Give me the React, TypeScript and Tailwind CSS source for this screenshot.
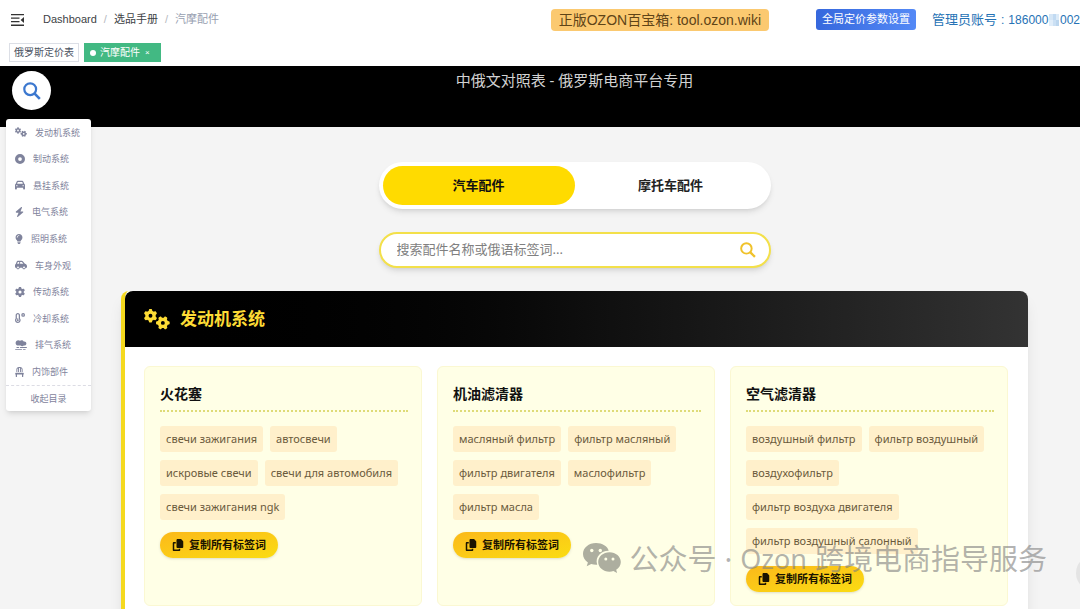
import React, { useState } from 'react';
import {
  FaBolt,
  FaCar,
  FaCarSide,
  FaChair,
  FaCircleDot,
  FaCopy,
  FaGear,
  FaGears,
  FaLightbulb,
  FaSmog,
  FaTemperatureLow,
} from 'react-icons/fa6';

const MENU = [
  { icon: FaGears, label: '发动机系统', size: 'h-[10px] w-3' },
  { icon: FaCircleDot, label: '制动系统', size: 'size-[10px]' },
  { icon: FaCar, label: '悬挂系统', size: 'size-[10px]' },
  { icon: FaBolt, label: '电气系统', size: 'h-[10px] w-[9px]' },
  { icon: FaLightbulb, label: '照明系统', size: 'h-[10px] w-2' },
  { icon: FaCarSide, label: '车身外观', size: 'h-[10px] w-3' },
  { icon: FaGear, label: '传动系统', size: 'size-[10px]' },
  { icon: FaTemperatureLow, label: '冷却系统', size: 'size-[10px]' },
  { icon: FaSmog, label: '排气系统', size: 'h-[10px] w-3' },
  { icon: FaChair, label: '内饰部件', size: 'h-[10px] w-[9px]' },
];

const PARTS = [
  {
    name: '火花塞',
    tags: ['свечи зажигания', 'автосвечи', 'искровые свечи', 'свечи для автомобиля', 'свечи зажигания ngk'],
  },
  {
    name: '机油滤清器',
    tags: ['масляный фильтр', 'фильтр масляный', 'фильтр двигателя', 'маслофильтр', 'фильтр масла'],
  },
  {
    name: '空气滤清器',
    tags: [
      'воздушный фильтр',
      'фильтр воздушный',
      'воздухофильтр',
      'фильтр воздуха двигателя',
      'фильтр воздушный салонный',
    ],
  },
];

function SearchIcon({ className }: { className: string }) {
  return (
    <svg viewBox="0 0 18 18" fill="none" stroke="currentColor" strokeWidth="2.2" className={className}>
      <circle cx="7.2" cy="7.2" r="5.9" />
      <path d="M11.4 11.4l5.4 5.4" strokeWidth="2.6" />
    </svg>
  );
}

function FoldIcon() {
  return (
    <svg viewBox="0 0 13 12" className="h-3 w-[13px]" fill="#333">
      <path d="M0 0h13v1.3H0zM0 3.5h8.5v1.3H0zM0 7h8.5v1.3H0zM0 10.6h13v1.3H0zM13 3v6L9.6 6z" />
    </svg>
  );
}

function TopBar() {
  return (
    <header className="flex h-[39px] items-center overflow-hidden pl-[11px] whitespace-nowrap">
      <button type="button" aria-label="menu">
        <FoldIcon />
      </button>
      <nav className="ml-[19px] flex gap-[7px] text-[11px] text-[#404245]">
        <a href="#dashboard">Dashboard</a>
        <span className="text-[#b5b9c0]">/</span>
        <a href="#manual">选品手册</a>
        <span className="text-[#b5b9c0]">/</span>
        <span className="text-[#97a0b0]">汽摩配件</span>
      </nav>
      <div className="ml-auto flex shrink-0 items-center">
        <div className="mr-[47px] flex h-[22px] items-center rounded-sm bg-[#fbc970] px-2 text-sm text-[#5f4417]">
          正版OZON百宝箱: tool.ozon.wiki
        </div>
        <button
          type="button"
          className="mb-px h-[21px] rounded-[3px] bg-linear-to-r from-[#3668dd] to-[#5489f6] px-[6px] text-[11px] text-white"
        >
          全局定价参数设置
        </button>
        <div className="ml-4 flex w-[148px] items-center text-[12px] text-[#2672b5]">
          <span className="text-[13px]">管理员账号</span>
          <span className="mx-1">:</span>
          <span>186000</span>
          <span className="mx-px grid h-3 w-[13px] grid-cols-3">
            <i className="bg-[#d5e6f6]" />
            <i className="bg-[#c1daf2]" />
            <i className="bg-[#dcebf8]" />
            <i className="bg-[#e0edf9]" />
            <i className="bg-[#cbe0f4]" />
            <i className="bg-[#bcd6ee]" />
          </span>
          <span>002</span>
        </div>
      </div>
    </header>
  );
}

function TabsBar() {
  return (
    <div className="flex h-[27px] items-start gap-[5px] bg-white pt-1 pl-[9px] text-[10px]">
      <a href="#price" className="flex h-[19px] items-center border border-[#dcdfe6] px-1 text-[#495060]">
        俄罗斯定价表
      </a>
      <a href="#parts" className="flex h-[19px] items-center bg-[#42b983] px-[6px] text-white">
        <span className="mr-1 size-[6px] rounded-full bg-white" />
        汽摩配件
        <span className="mx-[5px] text-[8px]">×</span>
      </a>
    </div>
  );
}

function SideMenu() {
  return (
    <nav className="absolute top-[53px] left-[6px] w-[85px] rounded-[3px] bg-white text-[9px] text-[#7f839c] shadow-md">
      <ul className="grid h-[266px] auto-rows-fr">
        {MENU.map(({ icon: Icon, label, size }) => (
          <li key={label}>
            <a href={`#${label}`} className="flex h-full items-center gap-2 pl-[9px]">
              <Icon className={size} />
              {label}
            </a>
          </li>
        ))}
      </ul>
      <button type="button" className="h-[26px] w-full border-t border-dashed border-[#dcdce4]">
        收起目录
      </button>
    </nav>
  );
}

function PartCard({ name, tags }: { name: string; tags: string[] }) {
  return (
    <article className="rounded-md border border-[#fbf8d2] bg-[#ffffe6] pr-[13px] pb-[13px] pl-[15px]">
      <h3 className="flex h-[45px] items-center border-b-2 border-dotted border-[#dedb78] pt-[10px] text-sm font-bold text-[#111]">
        {name}
      </h3>
      <ul className="mt-[14px] flex flex-wrap gap-x-[7px] gap-y-2 text-[11px] text-[#6a5a3c]">
        {tags.map((tag) => (
          <li key={tag} className="flex h-[26px] items-center rounded-[3px] bg-[#fff0cb] px-[6px] whitespace-nowrap">
            {tag}
          </li>
        ))}
      </ul>
      <button
        type="button"
        className="mt-3 flex h-[26px] items-center gap-[5px] rounded-full bg-linear-to-br from-[#fbb91a] to-[#fadc12] px-3 text-[11px] font-bold text-[#1a1400] shadow-sm"
      >
        <FaCopy className="size-3" />
        复制所有标签词
      </button>
    </article>
  );
}

export default function App() {
  const [kind, setKind] = useState('car');

  const tabClass = (value: string) =>
    kind === value ? 'flex-1 rounded-full bg-[#ffdb00] text-[#111]' : 'flex-1 rounded-full text-[#222]';

  return (
    <div className="relative h-screen overflow-hidden bg-white font-['Liberation_Sans','Noto_Sans_CJK_SC',sans-serif]">
      <TopBar />
      <TabsBar />

      <main className="relative min-h-full bg-[#f4f4f4] font-['Noto_Sans','Noto_Sans_CJK_SC',sans-serif]">
        <div className="h-[61px] bg-black pr-[52px] pl-[121px] text-center text-[15px] leading-[28px] text-[#d2d2d2]">
          中俄文对照表 - 俄罗斯电商平台专用
        </div>
        <button
          type="button"
          aria-label="搜索"
          className="absolute top-[5px] left-3 flex size-[39px] items-center justify-center rounded-full bg-white"
        >
          <SearchIcon className="size-[18px] text-[#3c78cf]" />
        </button>
        <SideMenu />

        <div className="pr-[52px] pl-[121px]">
          <div className="mx-auto mt-[35px] flex h-[47px] max-w-[392px] rounded-full bg-white p-1 text-[13px] font-bold shadow-md">
            <button type="button" className={tabClass('car')} onClick={() => setKind('car')}>
              汽车配件
            </button>
            <button type="button" className={tabClass('moto')} onClick={() => setKind('moto')}>
              摩托车配件
            </button>
          </div>

          <label className="mx-auto mt-[23px] flex h-9 max-w-[392px] items-center rounded-full border-2 border-[#f3e04a] bg-white pr-[13px] pl-4 shadow-md">
            <input
              type="text"
              aria-label="搜索配件"
              placeholder="搜索配件名称或俄语标签词..."
              className="min-w-0 flex-1 text-[13px] outline-none placeholder:text-[#808080]"
            />
            <SearchIcon className="size-4 text-[#f0c22a]" />
          </label>

          <section className="mt-[23px] rounded-lg border-l-4 border-[#f5d91e] bg-white shadow-lg">
            <h2 className="flex h-14 items-center gap-[10px] rounded-t-lg bg-linear-to-r from-black to-[#333] pl-[19px] text-[17px] font-bold text-[#fddc35]">
              <FaGears className="h-[22px] w-[26px]" />
              发动机系统
            </h2>
            <div className="grid grid-cols-3 gap-[15px] pt-[19px] pr-5 pb-10 pl-[19px]">
              {PARTS.map((part) => (
                <PartCard key={part.name} name={part.name} tags={part.tags} />
              ))}
            </div>
          </section>
        </div>
      </main>

      {/* marca d'água */}
      <div className="pointer-events-none absolute right-[33px] bottom-[29px] flex h-[42px] items-center gap-2 font-['Noto_Sans','Noto_Sans_CJK_SC',sans-serif] text-[29px] whitespace-nowrap text-[#808080]/60">
        <svg viewBox="0 0 38 33" className="h-[33px] w-[38px]" fill="#adae9f">
          <path d="M13 0C5.800 0 0 4.800 0 10.900c0 3.500 1.900 6.500 4.900 8.500L3.700 23.200l4.500-2.300c1.600.5 3.200.8 4.900.8h1.100c-2.600-8.300 4.500-14.200 11.500-14C24.500 3.200 19.300 0 13 0z" />
          <path d="M26.500 9.300c-6.300 0-11.300 4.300-11.300 9.700s5 9.700 11.300 9.700c1.400 0 2.700-.2 3.900-.6l3.700 2-.9-3.300c2.800-1.800 4.600-4.600 4.600-7.800 0-5.400-5-9.700-11.300-9.700z" />
          <g fill="#ffffe6">
            <circle cx="8.800" cy="7.500" r="1.700" />
            <circle cx="17.300" cy="7.500" r="1.700" />
            <circle cx="22.800" cy="16" r="1.500" />
            <circle cx="30" cy="16" r="1.500" />
          </g>
        </svg>
        <span>公众号</span>
        <span>·</span>
        <span className="text-[27px]">Ozon</span>
        <span>跨境电商指导服务</span>
      </div>
      <div className="absolute -right-8 bottom-[18px] size-9 rounded-full bg-[#e4e4e4]" />
    </div>
  );
}
